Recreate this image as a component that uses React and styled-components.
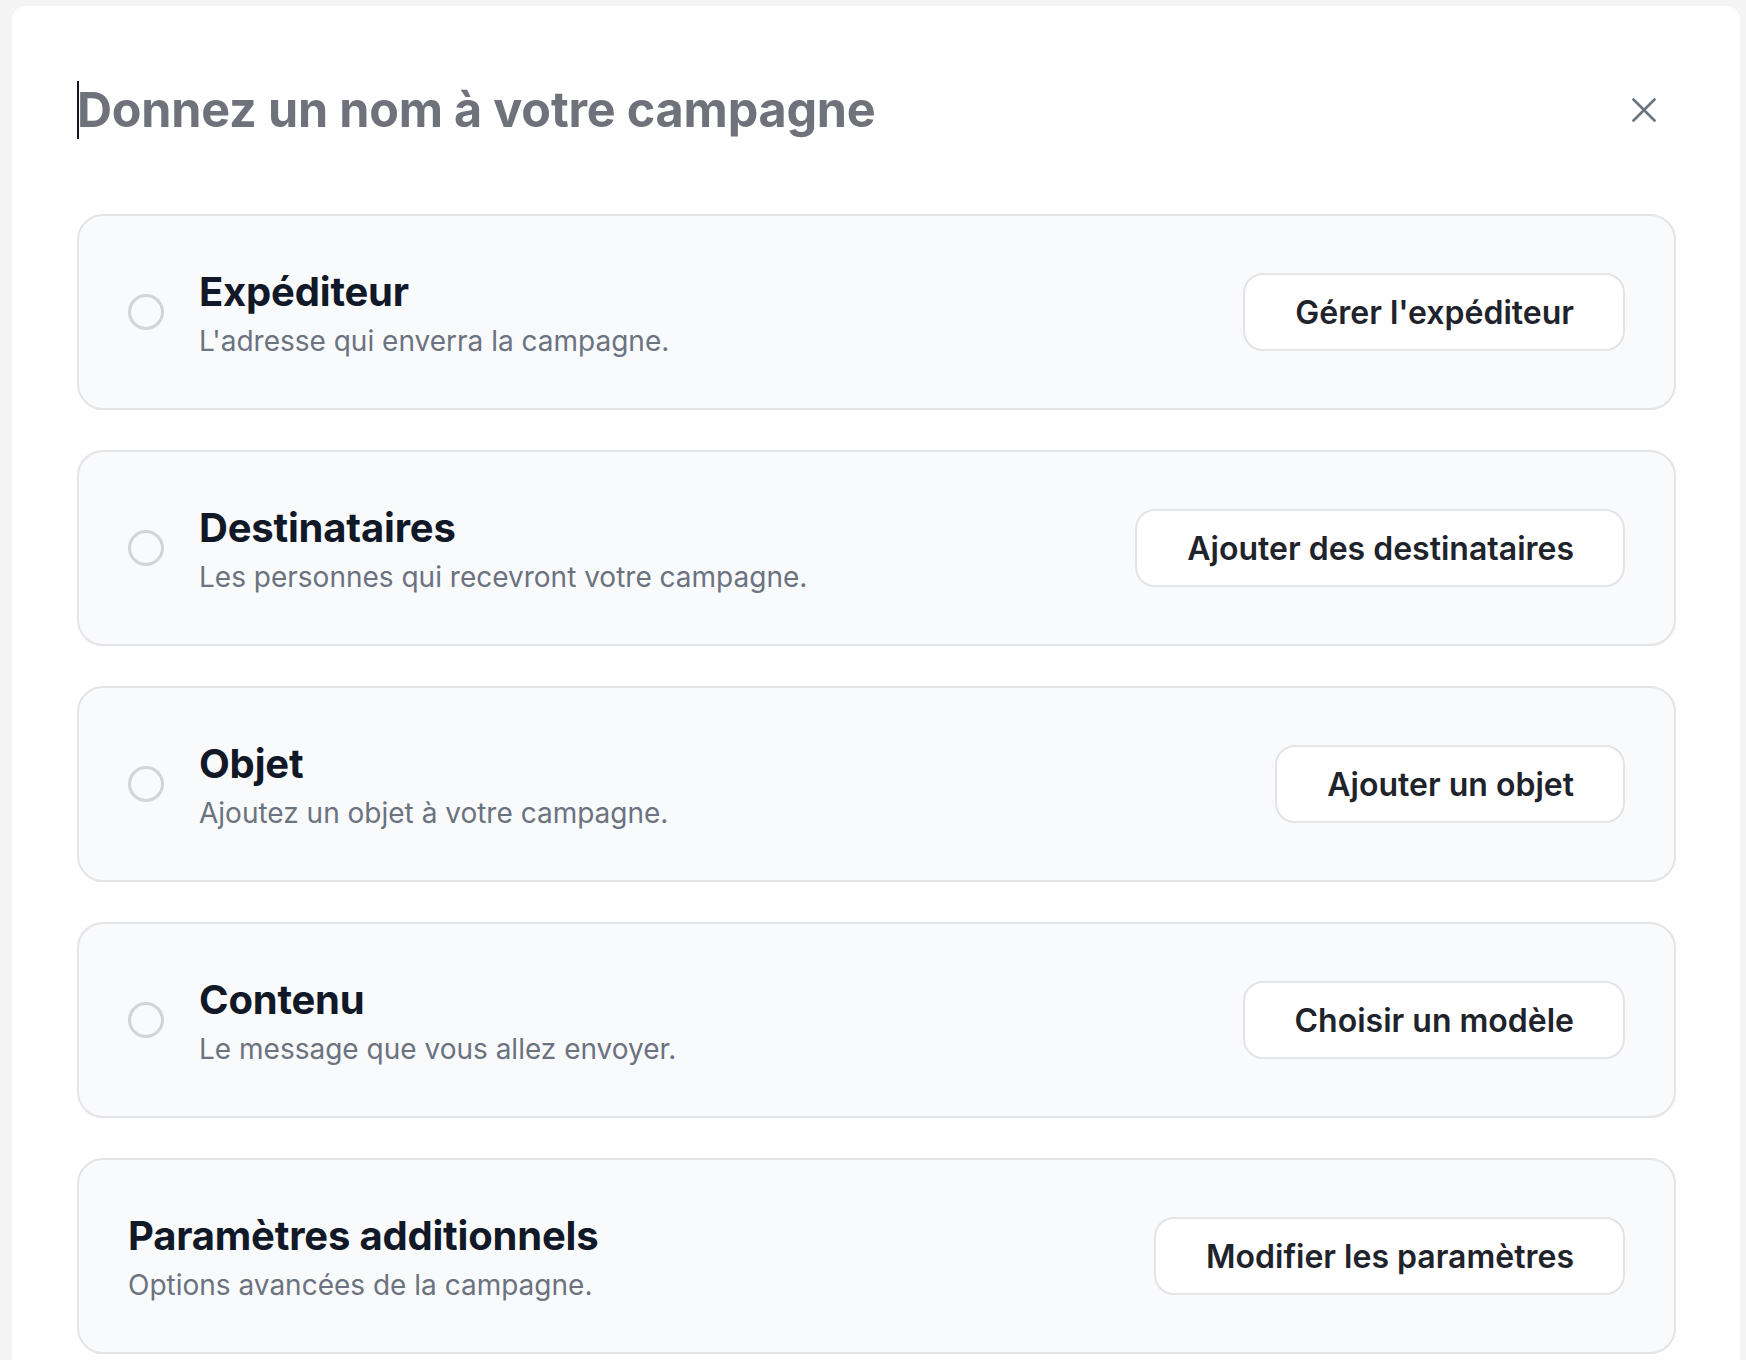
import React from 'react';
import styled, { createGlobalStyle } from 'styled-components';

const GlobalStyle = createGlobalStyle`
    * {
        box-sizing: border-box;
    }
    body {
        margin: 0;
        background: #f4f4f5;
        font-family: Inter, "Noto Sans", sans-serif;
        -webkit-font-smoothing: antialiased;
    }
`;

const Panel = styled.div`
    margin: 6px 6px 0 12px;
    min-height: 1354px;
    background: #ffffff;
    border-radius: 14px 14px 0 0;
    padding: 75px 64px 0 65px;
`;

const Header = styled.div`
    display: flex;
    align-items: center;
    justify-content: space-between;
    height: 58px;
    margin-bottom: 75px;
`;

const NameField = styled.div`
    display: flex;
    align-items: center;
    height: 58px;
`;

const Caret = styled.span`
    display: block;
    width: 2px;
    height: 58px;
    background: #111827;
    margin-right: -2px;
`;

const Placeholder = styled.span`
    font-size: 48.5px;
    font-weight: 700;
    line-height: 58px;
    color: #6f727a;
    letter-spacing: -0.2px;
`;

const CloseButton = styled.button`
    display: flex;
    align-items: center;
    justify-content: center;
    width: 42px;
    height: 42px;
    margin-right: 11px;
    padding: 0;
    border: none;
    background: transparent;
    color: #6b7280;
    cursor: pointer;
`;

const StepList = styled.div`
    display: flex;
    flex-direction: column;
    gap: 40px;
`;

const StepCard = styled.div`
    display: flex;
    align-items: center;
    height: 196px;
    padding: 0 49px;
    background: #f9fafb;
    border: 2px solid #e4e4e7;
    border-radius: 26px;
`;

const Radio = styled.span`
    flex: none;
    width: 36px;
    height: 36px;
    margin-right: 35px;
    border-radius: 50%;
    border: 3px solid #d4d4d8;
`;

const StepText = styled.div`
    flex: 1;
    display: flex;
    flex-direction: column;
    padding-top: 2px;
`;

const StepTitle = styled.div`
    font-size: 40px;
    font-weight: 700;
    line-height: 48px;
    color: #111827;
    letter-spacing: -0.2px;
`;

const StepHint = styled.div`
    margin-top: 7px;
    font-size: 28px;
    line-height: 36px;
    color: #6b7280;
`;

const ActionButton = styled.button`
    flex: none;
    height: 78px;
    padding: 0 49px 0 50px;
    background: #ffffff;
    border: 2px solid #e4e4e7;
    border-radius: 20px;
    font-family: inherit;
    font-size: 32px;
    font-weight: 600;
    color: #1f232b;
    cursor: pointer;
`;

const steps = [
    { title: 'Expéditeur', hint: "L'adresse qui enverra la campagne.", action: "Gérer l'expéditeur", radio: true },
    { title: 'Destinataires', hint: 'Les personnes qui recevront votre campagne.', action: 'Ajouter des destinataires', radio: true },
    { title: 'Objet', hint: 'Ajoutez un objet à votre campagne.', action: 'Ajouter un objet', radio: true },
    { title: 'Contenu', hint: 'Le message que vous allez envoyer.', action: 'Choisir un modèle', radio: true },
    { title: 'Paramètres additionnels', hint: 'Options avancées de la campagne.', action: 'Modifier les paramètres', radio: false },
];

function CloseIcon() {
    return (
        <svg width="24" height="24" viewBox="0 0 24 24" fill="none" stroke="currentColor" strokeWidth="2.6" strokeLinecap="round">
            <path d="M1.5 1.5 22.5 22.5M22.5 1.5 1.5 22.5" />
        </svg>
    );
}

function Step({ title, hint, action, radio }) {
    return (
        <StepCard>
            {radio && <Radio />}
            <StepText>
                <StepTitle>{title}</StepTitle>
                <StepHint>{hint}</StepHint>
            </StepText>
            <ActionButton>{action}</ActionButton>
        </StepCard>
    );
}

export default function App() {
    return (
        <>
            <GlobalStyle />
            <Panel>
                <Header>
                    <NameField>
                        <Caret />
                        <Placeholder>Donnez un nom à votre campagne</Placeholder>
                    </NameField>
                    <CloseButton aria-label="Fermer">
                        <CloseIcon />
                    </CloseButton>
                </Header>
                <StepList>
                    {steps.map((s) => (
                        <Step key={s.title} {...s} />
                    ))}
                </StepList>
            </Panel>
        </>
    );
}
